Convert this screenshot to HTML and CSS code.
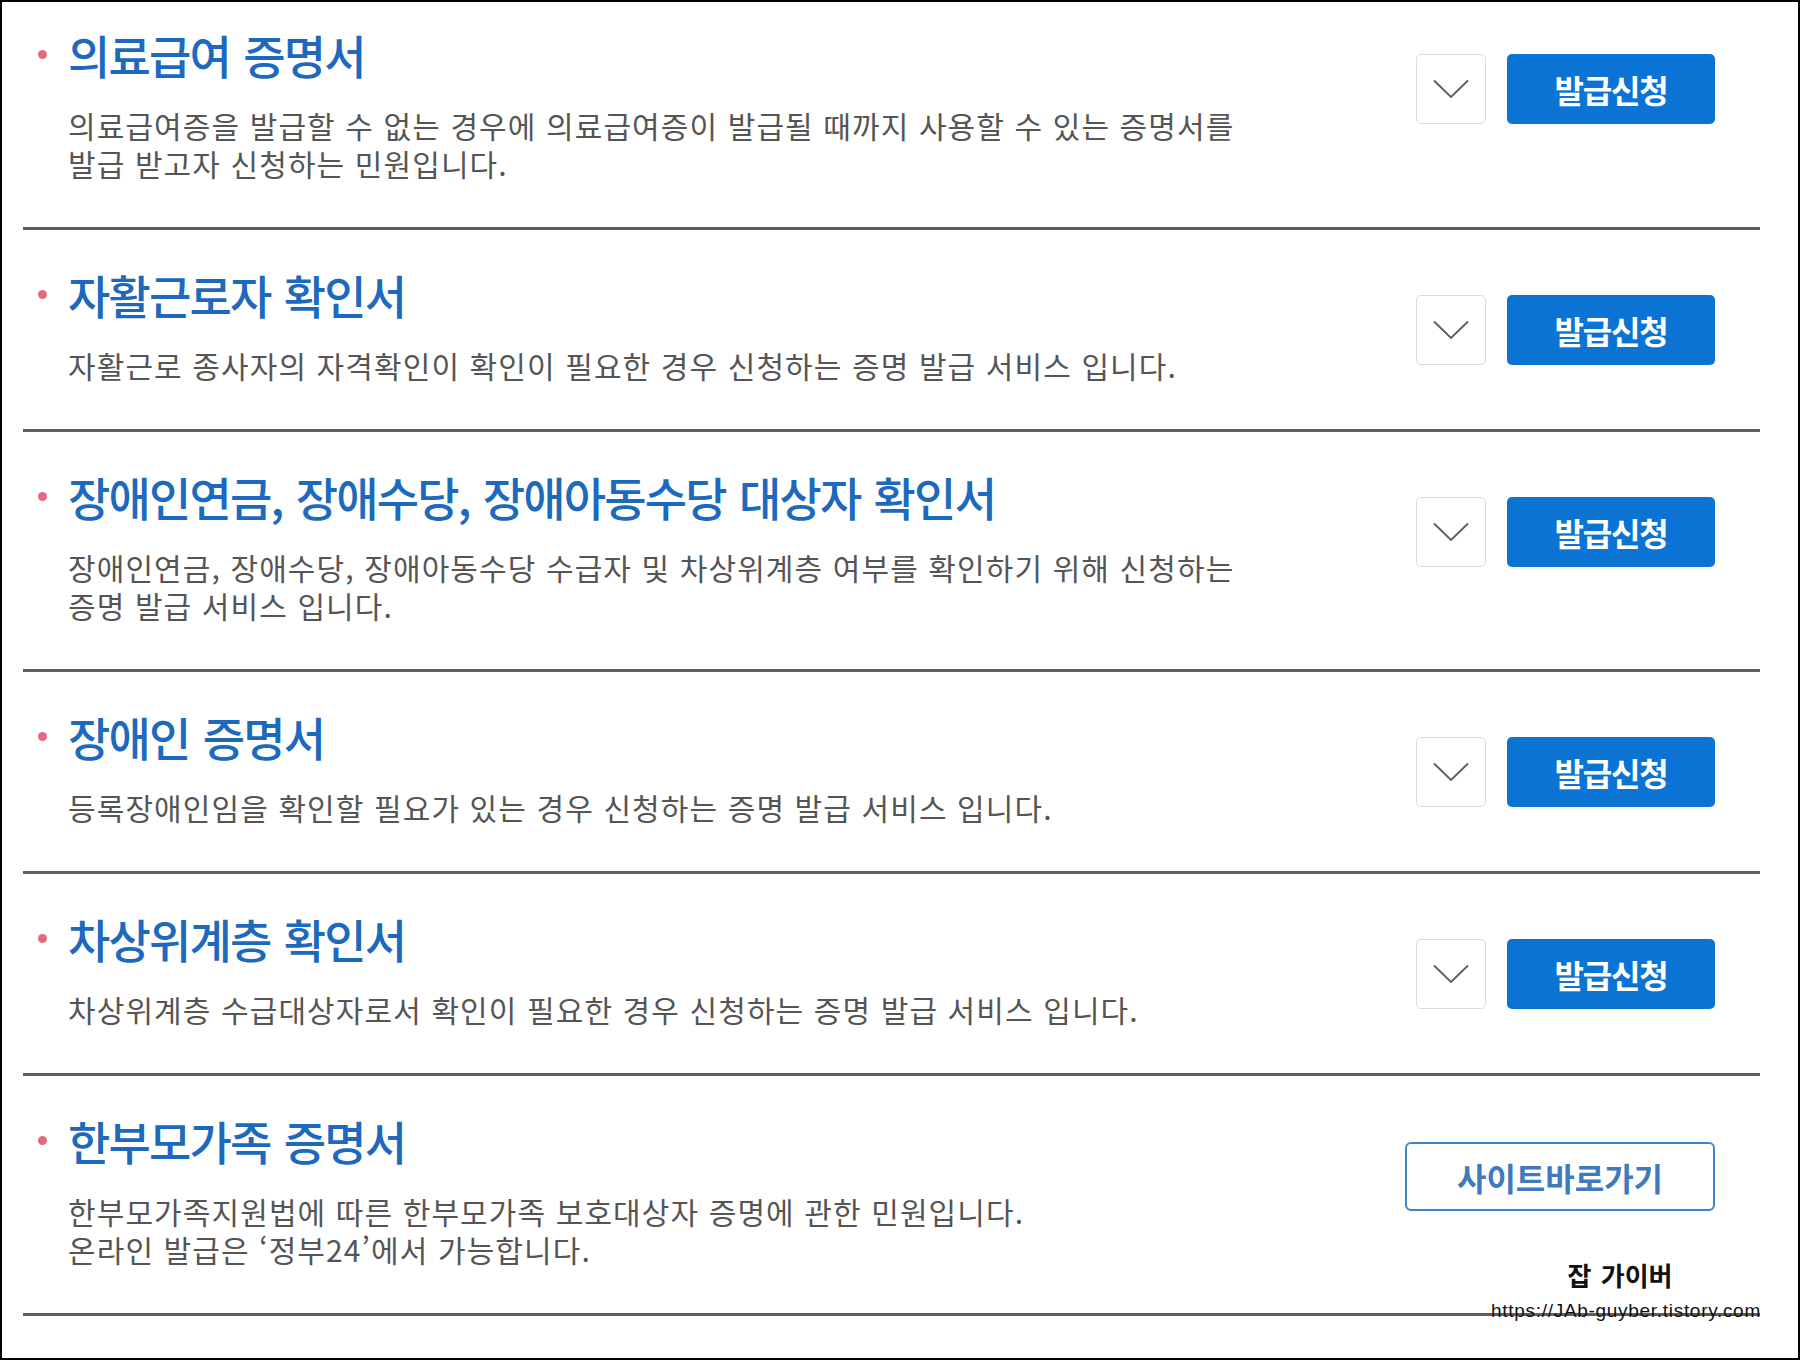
FILE: index.html
```html
<!DOCTYPE html>
<html lang="ko">
<head>
<meta charset="UTF-8">
<meta name="viewport" content="width=device-width, initial-scale=1.0">
<title>증명서 발급</title>
<link rel="stylesheet" href="styles.css">
</head>
<body>
<div class="frame">
  <ul class="cert-list">
    <li class="cert">
      <div class="cert-info">
        <h2 class="cert-title">의료급여 증명서</h2>
        <p class="cert-desc">의료급여증을 발급할 수 없는 경우에 의료급여증이 발급될 때까지 사용할 수 있는 증명서를<br>발급 받고자 신청하는 민원입니다.</p>
      </div>
      <div class="cert-actions">
        <button class="toggle"><svg width="36" height="20" viewBox="0 0 36 20"><polyline points="1,1.5 18,18 35,1.5"/></svg></button>
        <button class="apply">발급신청</button>
      </div>
    </li>
    <li class="cert">
      <div class="cert-info">
        <h2 class="cert-title">자활근로자 확인서</h2>
        <p class="cert-desc">자활근로 종사자의 자격확인이 확인이 필요한 경우 신청하는 증명 발급 서비스 입니다.</p>
      </div>
      <div class="cert-actions">
        <button class="toggle"><svg width="36" height="20" viewBox="0 0 36 20"><polyline points="1,1.5 18,18 35,1.5"/></svg></button>
        <button class="apply">발급신청</button>
      </div>
    </li>
    <li class="cert">
      <div class="cert-info">
        <h2 class="cert-title">장애인연금, 장애수당, 장애아동수당 대상자 확인서</h2>
        <p class="cert-desc">장애인연금, 장애수당, 장애아동수당 수급자 및 차상위계층 여부를 확인하기 위해 신청하는<br>증명 발급 서비스 입니다.</p>
      </div>
      <div class="cert-actions">
        <button class="toggle"><svg width="36" height="20" viewBox="0 0 36 20"><polyline points="1,1.5 18,18 35,1.5"/></svg></button>
        <button class="apply">발급신청</button>
      </div>
    </li>
    <li class="cert">
      <div class="cert-info">
        <h2 class="cert-title">장애인 증명서</h2>
        <p class="cert-desc">등록장애인임을 확인할 필요가 있는 경우 신청하는 증명 발급 서비스 입니다.</p>
      </div>
      <div class="cert-actions">
        <button class="toggle"><svg width="36" height="20" viewBox="0 0 36 20"><polyline points="1,1.5 18,18 35,1.5"/></svg></button>
        <button class="apply">발급신청</button>
      </div>
    </li>
    <li class="cert">
      <div class="cert-info">
        <h2 class="cert-title">차상위계층 확인서</h2>
        <p class="cert-desc">차상위계층 수급대상자로서 확인이 필요한 경우 신청하는 증명 발급 서비스 입니다.</p>
      </div>
      <div class="cert-actions">
        <button class="toggle"><svg width="36" height="20" viewBox="0 0 36 20"><polyline points="1,1.5 18,18 35,1.5"/></svg></button>
        <button class="apply">발급신청</button>
      </div>
    </li>
    <li class="cert">
      <div class="cert-info">
        <h2 class="cert-title">한부모가족 증명서</h2>
        <p class="cert-desc">한부모가족지원법에 따른 한부모가족 보호대상자 증명에 관한 민원입니다.<br>온라인 발급은 ‘정부24’에서 가능합니다.</p>
      </div>
      <div class="cert-actions">
        <button class="site-link">사이트바로가기</button>
      </div>
    </li>
  </ul>
  <div class="watermark">
    <div class="wm-name">잡 가이버</div>
    <div class="wm-url">https://JAb-guyber.tistory.com</div>
  </div>
</div>
</body>
</html>
```

FILE: styles.css
```css
body {
  margin: 0;
  background-color: #fff;
  font-family: "Noto Sans CJK KR", sans-serif;
}

.frame {
  position: relative;
  width: 1800px;
  height: 1360px;
  box-sizing: border-box;
  border: 2px solid #000;
  padding: 0 38px 0 21px;
}

.cert-list {
  list-style: none;
  margin: 0;
  padding: 0;
}

.cert {
  display: flex;
  align-items: flex-start;
  padding: 36px 45px 45px 15px;
  border-bottom: 3px solid #5f5f5f;
}

.cert:first-child {
  padding-top: 24px;
}

.cert-info {
  flex: 1;
}

.cert-title {
  display: flex;
  align-items: center;
  margin: 0;
  font-size: 46px;
  line-height: 56px;
  font-weight: 500;
  color: #1c69bd;
  letter-spacing: -1.8px;
  word-spacing: 2px;
  white-space: nowrap;
}

.cert-title::before {
  content: '';
  width: 9px;
  height: 9px;
  border-radius: 50%;
  background-color: #e2697f;
  margin-right: 21px;
  flex-shrink: 0;
}

.cert-desc {
  margin: 24px 0 0 30px;
  font-size: 30px;
  line-height: 38px;
  color: #555;
  letter-spacing: 1.1px;
  word-spacing: 0;
  white-space: nowrap;
}

.cert-actions {
  display: flex;
  gap: 21px;
  margin-top: 29px;
}

.cert:first-child .cert-actions {
  margin-top: 28px;
}

button {
  font-family: inherit;
  cursor: pointer;
}

.toggle {
  width: 70px;
  height: 70px;
  padding: 0;
  display: flex;
  align-items: center;
  justify-content: center;
  background-color: #fff;
  border: 1px solid #dcdcdc;
  border-radius: 5px;
}

.toggle polyline {
  fill: none;
  stroke: #5c5c5c;
  stroke-width: 1.8;
}

.apply {
  width: 208px;
  height: 70px;
  border: none;
  border-radius: 5px;
  background-color: #0b73d3;
  color: #fff;
  font-size: 32px;
  font-weight: 700;
  letter-spacing: -1.2px;
}

.site-link {
  width: 310px;
  height: 69px;
  margin-top: 1px;
  border: 2px solid #3d86c9;
  border-radius: 6px;
  background-color: #fff;
  color: #4079bc;
  font-size: 32px;
  font-weight: 700;
  letter-spacing: 0;
}

.watermark {
  position: absolute;
  left: 1469px;
  top: 1256px;
  width: 310px;
  text-align: center;
  color: #111;
}

.wm-name {
  margin-right: 12px;
  font-size: 26px;
  line-height: 34px;
  font-weight: 700;
  word-spacing: 2px;
}

.wm-url {
  margin-top: 9px;
  font-family: "Liberation Sans", sans-serif;
  font-size: 19px;
  line-height: 20px;
  letter-spacing: 0.7px;
  white-space: nowrap;
}
```
